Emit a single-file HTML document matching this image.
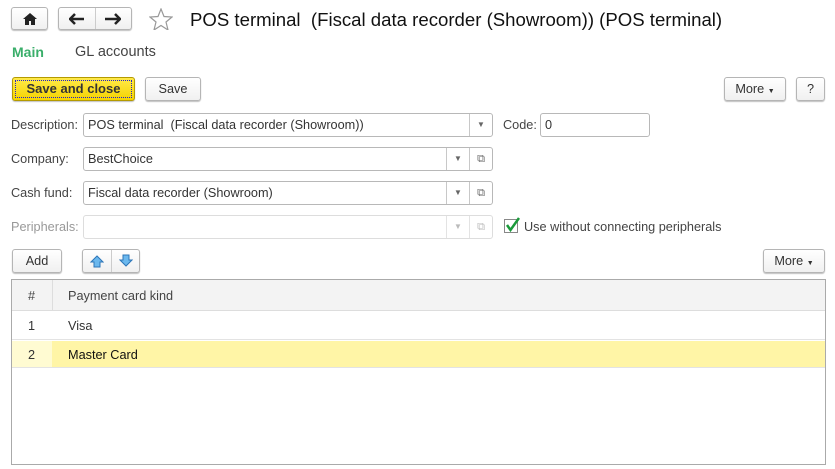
<!DOCTYPE html>
<html><head><style>
*{box-sizing:border-box;margin:0;padding:0}
body{width:835px;height:469px;background:#fff;font-family:"Liberation Sans",Arial,sans-serif;font-size:12.7px;color:#333;position:relative;overflow:hidden}
.a{position:absolute}
.btn{position:absolute;border:1px solid #b5b5b5;border-radius:3px;background:linear-gradient(#fff,#f0f0f0);box-shadow:0 1px 1px rgba(0,0,0,.25);text-align:center;color:#333}
.inp{position:absolute;border:1px solid #b8b8b8;border-radius:3px;background:#fff;height:24px;line-height:22px;padding-left:4px;color:#333}
.lbl{position:absolute;color:#444}
.seg{position:absolute;top:0;height:22px;border-left:1px solid #c8c8c8;width:23px;text-align:center;font-size:8px;line-height:22px;color:#666}
</style></head><body>
<div class="btn" style="left:11px;top:7px;width:37px;height:23px"><svg width="14" height="12" style="margin-top:5px" viewBox="0 0 14 12"><path d="M7 0L0 6h2v6h4V8h2v4h4V6h2z" fill="#222"/></svg></div>
<div class="btn" style="left:58px;top:7px;width:74px;height:23px"><div class="a" style="left:36px;top:0;height:21px;border-left:1px solid #ccc"></div>
<svg class="a" style="left:10px;top:5px" width="16" height="12" viewBox="0 0 16 12"><path d="M1 6h14M6 1L1 6l5 5" stroke="#222" stroke-width="2.5" fill="none"/></svg>
<svg class="a" style="left:46px;top:5px" width="16" height="12" viewBox="0 0 16 12"><path d="M0 6h14M10 1l5 5-5 5" stroke="#222" stroke-width="2.5" fill="none"/></svg></div>
<svg class="a" style="left:149px;top:8px" width="24" height="22" viewBox="0 0 24 22"><path d="M12 1l3 7.5 8 .5-6 5 2 8-7-4.5-7 4.5 2-8-6-5 8-.5z" fill="none" stroke="#999" stroke-width="1.2"/></svg>
<div class="a" style="left:190px;top:9px;font-size:18.6px;color:#111">POS terminal &nbsp;(Fiscal data recorder (Showroom)) (POS terminal)</div>
<div class="a" style="left:12px;top:44px;font-size:14px;font-weight:bold;color:#3aae6a">Main</div>
<div class="a" style="left:75px;top:44px;font-size:14.5px;color:#444">GL accounts</div>
<div class="btn" style="left:12px;top:77px;width:123px;height:24px;background:linear-gradient(#ffe94a,#f5d400);border-color:#b49a00;font-weight:bold;line-height:22px;font-size:13px;color:#333"><div class="a" style="left:2px;top:2px;right:2px;bottom:2px;border:1px dotted #22c"></div>Save and close</div>
<div class="btn" style="left:145px;top:77px;width:56px;height:24px;line-height:22px">Save</div>
<div class="btn" style="left:724px;top:77px;width:62px;height:24px;line-height:22px">More <span style="font-size:7px">▼</span></div>
<div class="btn" style="left:796px;top:77px;width:29px;height:24px;line-height:22px">?</div>

<div class="lbl" style="left:11px;top:118px">Description:</div>
<div class="inp" style="left:83px;top:113px;width:410px">POS terminal &nbsp;(Fiscal data recorder (Showroom))<div class="seg" style="right:0">▼</div></div>
<div class="lbl" style="left:503px;top:118px">Code:</div>
<div class="inp" style="left:540px;top:113px;width:110px">0</div>

<div class="lbl" style="left:11px;top:152px">Company:</div>
<div class="inp" style="left:83px;top:147px;width:410px">BestChoice<div class="seg" style="right:23px">▼</div><div class="seg" style="right:0;font-size:11px">⧉</div></div>
<div class="lbl" style="left:11px;top:186px">Cash fund:</div>
<div class="inp" style="left:83px;top:181px;width:410px">Fiscal data recorder (Showroom)<div class="seg" style="right:23px">▼</div><div class="seg" style="right:0;font-size:11px">⧉</div></div>
<div class="lbl" style="left:11px;top:220px;color:#999">Peripherals:</div>
<div class="inp" style="left:83px;top:215px;width:410px;border-color:#ddd"><div class="seg" style="right:23px;color:#bbb;border-color:#e3e3e3">▼</div><div class="seg" style="right:0;font-size:11px;color:#bbb;border-color:#e3e3e3">⧉</div></div>
<div class="a" style="left:504px;top:219px;width:14px;height:14px;border:1px solid #888;background:#fff"></div>
<svg class="a" style="left:505px;top:216px" width="16" height="17" viewBox="0 0 16 17"><path d="M2 9l3.5 5L14 2" stroke="#1a9a3a" stroke-width="2.5" fill="none"/></svg>
<div class="lbl" style="left:524px;top:220px">Use without connecting peripherals</div>

<div class="btn" style="left:12px;top:249px;width:50px;height:24px;line-height:22px">Add</div>
<div class="btn" style="left:82px;top:249px;width:58px;height:24px"><div class="a" style="left:28px;top:0;height:22px;border-left:1px solid #ccc"></div>
<svg class="a" style="left:7px;top:5px" width="14" height="13" viewBox="0 0 14 13"><path d="M7 1L1 7h3v5h6V7h3z" fill="#6bb8ee" stroke="#2d76b8"/></svg>
<svg class="a" style="left:36px;top:4px" width="14" height="13" viewBox="0 0 14 13"><path d="M7 12L1 6h3V1h6v5h3z" fill="#6bb8ee" stroke="#2d76b8"/></svg></div>
<div class="btn" style="left:763px;top:249px;width:62px;height:24px;line-height:22px">More <span style="font-size:7px">▼</span></div>

<div class="a" style="left:11px;top:279px;width:815px;height:186px;border:1px solid #aaa;background:#fff">
<div class="a" style="left:0;top:0;right:0;height:31px;background:#f3f3f3;border-bottom:1px solid #ddd"></div>
<div class="a" style="left:40px;top:0;height:30px;border-left:1px solid #ddd"></div>
<div class="a" style="left:16px;top:9px;color:#444">#</div>
<div class="a" style="left:56px;top:9px;color:#444">Payment card kind</div>
<div class="a" style="left:0;top:31px;right:0;height:29px;border-bottom:1px solid #e3e3e3"></div>
<div class="a" style="left:16px;top:39px">1</div><div class="a" style="left:56px;top:39px">Visa</div>
<div class="a" style="left:0;top:61px;width:40px;height:27px;background:#fffbd2;border-bottom:1px solid #e3e3e3"></div>
<div class="a" style="left:40px;top:61px;right:0;height:27px;background:#fff5a6;border-bottom:1px solid #e3e3e3"></div>
<div class="a" style="left:16px;top:68px">2</div><div class="a" style="left:56px;top:68px;color:#111">Master Card</div>
</div>
</body></html>
